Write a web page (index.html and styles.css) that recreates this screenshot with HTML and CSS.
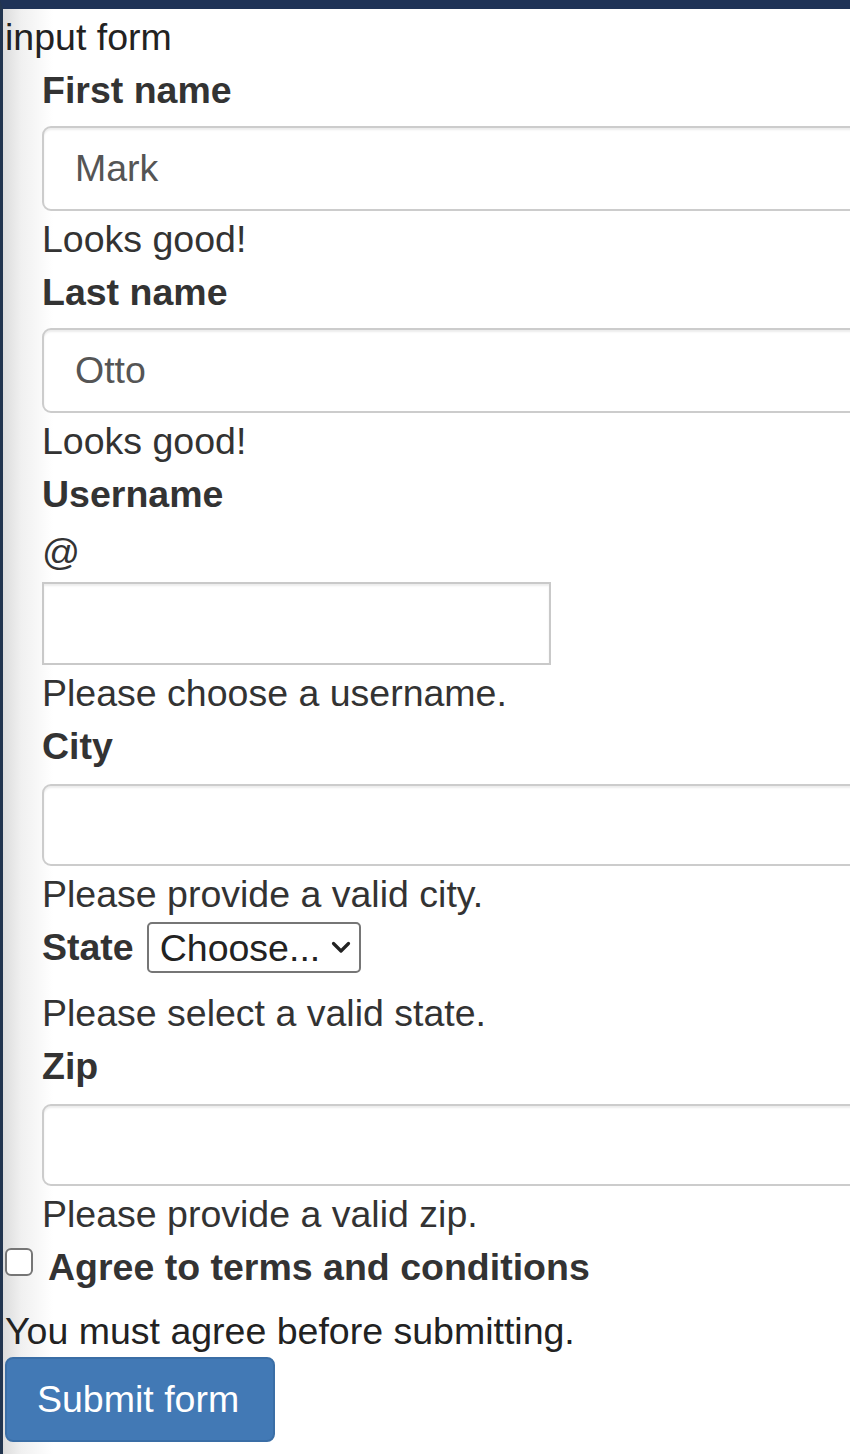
FILE: index.html
```html
<!DOCTYPE html>
<html lang="en">
<head>
<meta charset="utf-8">
<title>input form</title>
<link rel="stylesheet" href="styles.css">
</head>
<body>
<div class="frame">
  <div class="title">input form</div>
  <form class="form">
    <div class="group">
      <label class="label" for="fn">First name</label>
      <input class="field" id="fn" type="text" value="Mark">
      <div class="feedback">Looks good!</div>
    </div>
    <div class="group">
      <label class="label" for="ln">Last name</label>
      <input class="field" id="ln" type="text" value="Otto">
      <div class="feedback">Looks good!</div>
    </div>
    <div class="group">
      <label class="label" for="un">Username</label>
      <div class="addon">@</div>
      <input class="field field-plain" id="un" type="text">
      <div class="feedback">Please choose a username.</div>
    </div>
    <div class="group">
      <label class="label" for="city">City</label>
      <input class="field field-city" id="city" type="text">
      <div class="feedback">Please provide a valid city.</div>
    </div>
    <div class="group">
      <div class="state-row">
        <label class="label label-inline" for="st">State</label>
        <span class="select-wrap">
          <select class="select" id="st"><option>Choose...</option></select>
          <svg class="chevron" width="20" height="14" viewBox="0 0 20 14"><path d="M2.5 3.5 L10 11 L17.5 3.5" fill="none" stroke="#222" stroke-width="3.2" stroke-linecap="round" stroke-linejoin="round"/></svg>
        </span>
      </div>
      <div class="feedback">Please select a valid state.</div>
    </div>
    <div class="group">
      <label class="label" for="zip">Zip</label>
      <input class="field field-city" id="zip" type="text">
      <div class="feedback">Please provide a valid zip.</div>
    </div>
  </form>
  <div class="check-row">
    <input class="check" type="checkbox" id="agree">
    <label class="check-label" for="agree">Agree to terms and conditions</label>
  </div>
  <div class="must">You must agree before submitting.</div>
  <button class="submit" type="button">Submit form</button>
</div>
</body>
</html>
```
FILE: styles.css
```css
html, body {
  margin: 0;
  padding: 0;
  overflow: hidden;
  background: #fff;
}
.frame {
  min-height: 1454px;
  box-sizing: border-box;
  border-top: 9px solid #1f3357;
  border-left: 3px solid #22354f;
  background: linear-gradient(to right, #dcdcdc 0px, #f0f0f0 18px, #ffffff 50px);
  padding: 2px 0 0 2px;
  font-family: "Liberation Sans", Arial, sans-serif;
  font-size: 37.5px;
  line-height: 53px;
  color: #222;
}
.title {
  color: #222;
}
.form {
  padding-left: 37px;
}
.group {
  display: flex;
  flex-direction: column;
  align-items: flex-start;
}
.label {
  font-weight: bold;
  color: #333;
  margin-bottom: 9px;
}
.field {
  box-sizing: border-box;
  width: 900px;
  height: 85px;
  border: 2px solid #cccccc;
  border-radius: 9px;
  box-shadow: inset 0 2px 2px rgba(0,0,0,0.075);
  padding: 0 31px;
  font-family: "Liberation Sans", Arial, sans-serif;
  font-size: 37.5px;
  color: #555;
  background: #fff;
  margin: 0 0 2px 0;
  outline: none;
}
.field-city {
  height: 82px;
  margin-top: 2px;
  margin-bottom: 2px;
}
.addon {
  color: #333;
  margin-top: -4px;
  margin-bottom: 3px;
}
.field-plain {
  width: 509px;
  height: 83px;
  border-radius: 0;
  border-color: #c9c9c9;
}
.feedback {
  color: #333;
}
.state-row {
  display: flex;
  align-items: flex-start;
  height: 66px;
}
.label-inline {
  margin: 0 13px 0 0;
}
.select-wrap {
  position: relative;
  display: inline-block;
  margin-top: 1px;
}
.select {
  appearance: none;
  -webkit-appearance: none;
  box-sizing: border-box;
  width: 214px;
  height: 51px;
  border: 2px solid #767676;
  border-radius: 5px;
  background: #fff;
  font-family: "Liberation Sans", Arial, sans-serif;
  font-size: 37.5px;
  color: #222;
  padding: 0 0 0 11px;
  display: block;
}
.chevron {
  position: absolute;
  right: 10px;
  top: 18px;
  pointer-events: none;
}
.check-row {
  display: flex;
  align-items: flex-start;
  height: 53px;
}
.check {
  appearance: none;
  -webkit-appearance: none;
  box-sizing: border-box;
  width: 28px;
  height: 28px;
  margin: 7px 15px 0 0;
  border: 2px solid #767676;
  border-radius: 6px;
  background: #fff;
}
.check-label {
  font-weight: bold;
  color: #333;
}
.must {
  margin-top: 11px;
  color: #222;
}
.submit {
  box-sizing: border-box;
  width: 270px;
  height: 85px;
  margin-top: -1px;
  background: #4279b5;
  border: 2px solid #3a6ea6;
  border-radius: 8px;
  color: #fff;
  font-family: "Liberation Sans", Arial, sans-serif;
  font-size: 37.5px;
  text-align: left;
  padding: 0 0 0 30px;
}
```
